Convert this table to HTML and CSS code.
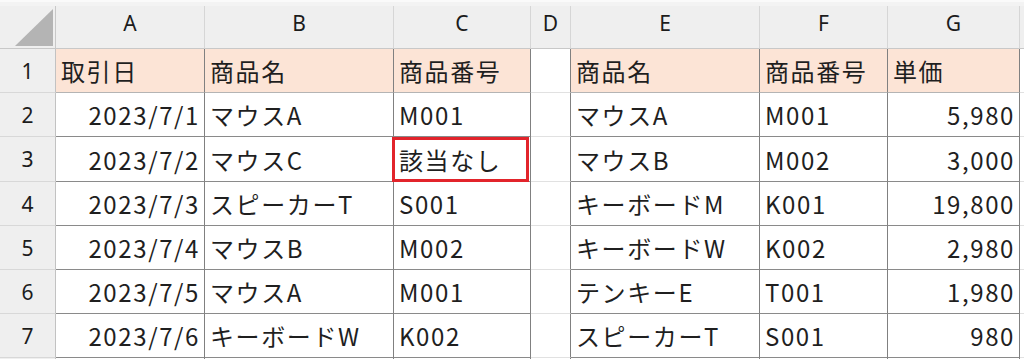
FILE: index.html
```html
<!DOCTYPE html>
<html lang="ja">
<head>
<meta charset="utf-8">
<title>Sheet</title>
<link rel="stylesheet" href="styles.css">
</head>
<body>
<div class="sheet">
  <div class="strip"></div>

  <div class="corner"><svg width="55" height="42" viewBox="0 0 55 42"><polygon points="15,40 53,40 53,3" fill="#b4b4b4"/></svg></div>
  <div class="ch">A</div><div class="ch">B</div><div class="ch">C</div><div class="ch">D</div><div class="ch">E</div><div class="ch">F</div><div class="ch">G</div><div class="ch last"></div>

  <div class="rh">1</div>
  <div class="c hd">取引日</div><div class="c hd">商品名</div><div class="c hd">商品番号</div><div class="d"></div><div class="c hd">商品名</div><div class="c hd">商品番号</div><div class="c hd">単価</div><div class="e"></div>

  <div class="rh">2</div>
  <div class="c r">2023/7/1</div><div class="c">マウスA</div><div class="c">M001</div><div class="d"></div><div class="c">マウスA</div><div class="c">M001</div><div class="c r">5,980</div><div class="e"></div>

  <div class="rh">3</div>
  <div class="c r">2023/7/2</div><div class="c">マウスC</div><div class="c sel">該当なし</div><div class="d"></div><div class="c">マウスB</div><div class="c">M002</div><div class="c r">3,000</div><div class="e"></div>

  <div class="rh">4</div>
  <div class="c r">2023/7/3</div><div class="c">スピーカーT</div><div class="c">S001</div><div class="d"></div><div class="c">キーボードM</div><div class="c">K001</div><div class="c r">19,800</div><div class="e"></div>

  <div class="rh">5</div>
  <div class="c r">2023/7/4</div><div class="c">マウスB</div><div class="c">M002</div><div class="d"></div><div class="c">キーボードW</div><div class="c">K002</div><div class="c r">2,980</div><div class="e"></div>

  <div class="rh">6</div>
  <div class="c r">2023/7/5</div><div class="c">マウスA</div><div class="c">M001</div><div class="d"></div><div class="c">テンキーE</div><div class="c">T001</div><div class="c r">1,980</div><div class="e"></div>

  <div class="rh">7</div>
  <div class="c r">2023/7/6</div><div class="c">キーボードW</div><div class="c">K002</div><div class="d"></div><div class="c">スピーカーT</div><div class="c">S001</div><div class="c r">980</div><div class="e"></div>

  <div class="rh tail"></div>
  <div class="c tail"></div><div class="c tail"></div><div class="c tail"></div><div class="d tail"></div><div class="c tail"></div><div class="c tail"></div><div class="c tail"></div><div class="e tail"></div>
</div>
</body>
</html>
```

FILE: styles.css
```css
* { box-sizing: border-box; }
html, body { margin: 0; padding: 0; background: #ffffff; }
body { width: 1024px; height: 359px; overflow: hidden; }

.sheet {
  display: grid;
  grid-template-columns: 56px 149px 189px 137px 40px 189px 128px 132px 4px;
  grid-template-rows: 6px 43px 44px 44px 45px 44px 44px 44px 44px 11px;
  width: 1024px;
  height: 359px;
  font-family: "Noto Sans CJK JP", "Noto Sans", sans-serif;
  color: #1f1f1f;
}

.strip {
  grid-column: 1 / -1;
  background: #f3f3f3;
  border-top: 2px solid #fafafa;
}

.corner {
  background: #efefef;
  border-right: 1px solid #c8c8c8;
  border-bottom: 1px solid #c8c8c8;
}
.corner svg { display: block; }

.ch {
  background: #efefef;
  border-right: 1px solid #d6d6d6;
  border-bottom: 1px solid #c8c8c8;
  display: flex;
  align-items: center;
  justify-content: center;
  font-family: "Noto Sans", "Open Sans", sans-serif;
  font-size: 21px;
  color: #1c1c1c;
  padding-bottom: 8px;
}
.ch.last { border-right: none; }

.rh {
  background: #efefef;
  border-right: 1px solid #c2c2c2;
  border-bottom: 1px solid #d8d8d8;
  display: flex;
  align-items: center;
  justify-content: center;
  font-family: "Noto Sans", "Open Sans", sans-serif;
  font-size: 21px;
  color: #1c1c1c;
}

.c {
  border-right: 1px solid #808080;
  border-bottom: 1px solid #8a8a8a;
  font-size: 24px;
  letter-spacing: 1.6px;
  padding: 0 4px 0 5px;
  white-space: nowrap;
  overflow: hidden;
  display: flex;
  align-items: center;
}
.c.r { justify-content: flex-end; }
.hd { background: #fce4d6; border-bottom-color: #b4b4b4; }

.d {
  border-right: 1px solid #808080;
  border-bottom: 1px solid #e1e1e1;
}
.e { border-bottom: 1px solid #e1e1e1; }

.sel { position: relative; overflow: visible; }
.sel::after {
  content: "";
  position: absolute;
  top: 0;
  left: -2px;
  right: 1px;
  bottom: -1px;
  border: 3px solid #e2242b;
}

.tail { border-bottom: none; }
```
